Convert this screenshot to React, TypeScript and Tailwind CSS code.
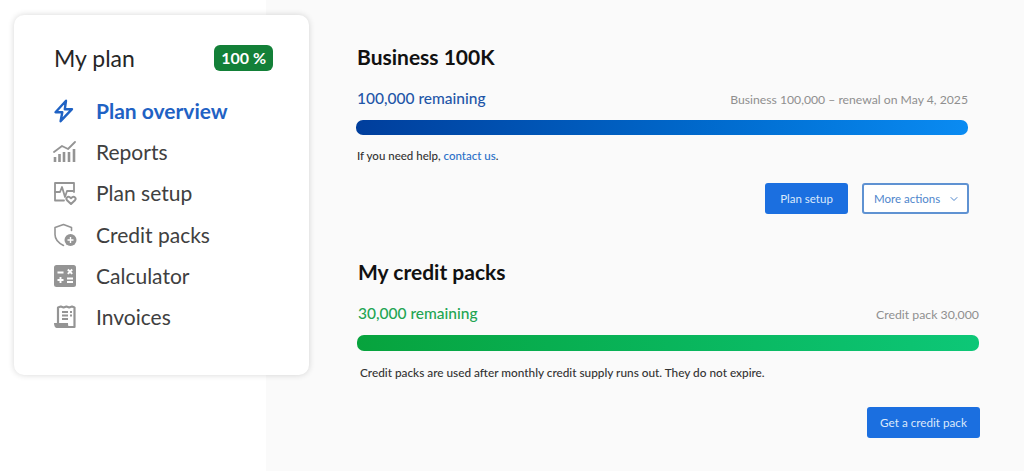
import type { ReactNode } from 'react';
import { ChevronDown } from 'lucide-react';

const gray = '#949494';

function BoltIcon() {
  return (
    <svg width="24" height="24" viewBox="0 0 24 24" fill="none" stroke="#1f62c4" strokeWidth="2.4" strokeLinejoin="round" strokeLinecap="round">
      <path d="M13 1.800 2.500 13.200h6.800L7.600 22.200 19 10.200h-7.200z" />
    </svg>
  );
}

function ReportsIcon() {
  return (
    <svg width="24" height="24" viewBox="0 0 24 24" fill="none" stroke={gray} strokeLinecap="round" strokeLinejoin="round">
      <path d="M1 12 9 6l6 3 7-7" strokeWidth="1.800" />
      <path d="M2 22v-5M6.500 22v-8M11 22v-10M16 22V12M21 22V9" strokeWidth="2.600" strokeLinecap="butt" />
    </svg>
  );
}

function SetupIcon() {
  return (
    <svg width="24" height="24" viewBox="0 0 24 24" fill="none" stroke={gray} strokeWidth="1.800" strokeLinecap="round" strokeLinejoin="round">
      <path d="M11 19.500H2V2h19v9" />
      <path d="M2 11h5l2-5 3 10 2-6h6" />
      <path d="M18 23l-4-3.800c-1.700-2 .9-4.500 2.800-2.900l1.200 1 1.200-1c1.900-1.600 4.500.9 2.800 2.900z" strokeWidth="2" />
    </svg>
  );
}

function ShieldIcon() {
  return (
    <svg width="24" height="24" viewBox="0 0 24 24" fill="none">
      <path d="M10.500 1.500 2 4.500v7c0 5 3.500 8.500 8.500 11M10.500 1.500l8 3v3" stroke={gray} strokeWidth="1.600" strokeLinecap="round" strokeLinejoin="round" />
      <circle cx="17.500" cy="17" r="6" fill={gray} />
      <path d="M17.500 14v6M14.500 17h6" stroke="#fff" strokeWidth="1.400" />
    </svg>
  );
}

function CalculatorIcon() {
  return (
    <svg width="24" height="24" viewBox="0 0 24 24" fill="none">
      <rect x="1" y="1" width="22" height="22" rx="2.500" fill={gray} />
      <path d="M4.500 8.500h6M4.500 16h6M7.500 13v6M14 14.500h6M14 18h6M14.800 5.500l4.400 4.400M19.200 5.500l-4.400 4.400" stroke="#fff" strokeWidth="1.900" />
    </svg>
  );
}

function InvoiceIcon() {
  return (
    <svg width="24" height="24" viewBox="0 0 24 24" fill="none">
      <path d="M5 19V2.500l2.800-1 2.800 1 2.800-1 2.800 1 2.800-1 2.500 1V22H4" stroke={gray} strokeWidth="2.200" strokeLinejoin="round" />
      <path d="M1 18h14c0 2.500.5 5 2 5H3.500C2 23 1 20.500 1 18z" fill={gray} />
      <path d="M9 7h6M9 10.500h6M9 14h6M17 7h2M17 10.500h2" stroke={gray} strokeWidth="1.800" />
    </svg>
  );
}

const nav: { label: string; icon: ReactNode; active?: boolean }[] = [
  { label: 'Plan overview', icon: <BoltIcon />, active: true },
  { label: 'Reports', icon: <ReportsIcon /> },
  { label: 'Plan setup', icon: <SetupIcon /> },
  { label: 'Credit packs', icon: <ShieldIcon /> },
  { label: 'Calculator', icon: <CalculatorIcon /> },
  { label: 'Invoices', icon: <InvoiceIcon /> },
];

export default function App() {
  return (
    <div className="flex h-[471px] w-[1024px] overflow-hidden bg-white font-['Lato',sans-serif]">
      <aside className="w-[266px] shrink-0 pl-[14px] pt-[15px]">
        <div className="relative z-10 h-[360px] w-[295px] rounded-[10px] bg-white pl-[39px] pr-[36px] pt-[27px] shadow-[0_0_6px_rgba(0,0,0,0.16)]">
          <div className="flex items-center justify-between pl-[1px]">
            <span className="text-[23px] leading-[32px] text-[#262626]">My plan</span>
            <span className="flex h-[26px] items-center rounded-md bg-[#138038] px-[7px] text-[16px] font-bold text-white">100 %</span>
          </div>
          <ul className="mt-[16px]">
            {nav.map(item => (
              <li key={item.label} className="flex h-[41.300px] items-center gap-[19px]">
                <span className="flex w-[24px] justify-center">{item.icon}</span>
                <span className={item.active ? 'text-[21px] font-bold text-[#1f62c4]' : 'text-[21px] text-[#404040]'}>{item.label}</span>
              </li>
            ))}
          </ul>
        </div>
      </aside>

      <main className="flex-1 bg-[#fafafa] pl-[89px] pr-[44px] pt-[42px]">
        <section className="w-[614px]">
          <h2 className="pl-[2px] text-[21px] font-bold leading-[30px] text-[#111]">Business 100K</h2>
          <div className="mt-[15px] flex h-[22px] items-baseline justify-between pl-[2px] pr-[1px]">
            <span className="text-[15.500px] font-medium text-[#1f56a8]">100,000 remaining</span>
            <span className="text-[12.200px] text-[#8f8f8f]">Business 100,000 – renewal on May 4, 2025</span>
          </div>
          <div className="ml-[1px] mt-[11px] h-[15px] w-[612px] rounded-[7px] bg-gradient-to-r from-[#003e9c] to-[#0a8bf2]" />
          <p className="mt-[13px] pl-[2px] text-[11.500px] font-medium leading-[16px] text-[#333]">
            If you need help, <span className="text-[#2a70c8]">contact us</span>.
          </p>
          <div className="mt-[19px] flex justify-end gap-[14px]">
            <button className="h-[31px] w-[83px] rounded-[3px] bg-[#1b6fe0] text-[11.500px] text-[#dbe9fb]">Plan setup</button>
            <button className="flex h-[31px] w-[107px] items-center justify-between whitespace-nowrap rounded-[3px] border-2 border-[#5f92d2] bg-white pl-[10px] pr-[7px] text-[11.500px] text-[#4f86cc]">
              More actions
              <ChevronDown size={12} />
            </button>
          </div>
        </section>

        <section className="mt-[43px] w-[625px] pl-[2px]">
          <h2 className="pl-[1px] text-[21px] font-bold leading-[30px] text-[#111]">My credit packs</h2>
          <div className="mt-[15px] flex h-[22px] items-baseline justify-between pl-[1px]">
            <span className="text-[15.500px] font-medium text-[#22a552]">30,000 remaining</span>
            <span className="pr-[1px] text-[12.300px] text-[#8f8f8f]">Credit pack 30,000</span>
          </div>
          <div className="mt-[11px] h-[16px] w-[622px] rounded-[7px] bg-gradient-to-r from-[#07a33d] to-[#0dc777]" />
          <p className="mt-[14px] pl-[3px] text-[11.800px] font-medium leading-[16px] text-[#333]">
            Credit packs are used after monthly credit supply runs out. They do not expire.
          </p>
          <div className="mt-[26px] flex justify-end">
            <button className="h-[31px] w-[113px] rounded-[3px] bg-[#1b6fe0] text-[11.700px] text-[#dbe9fb]">Get a credit pack</button>
          </div>
        </section>
      </main>
    </div>
  );
}
